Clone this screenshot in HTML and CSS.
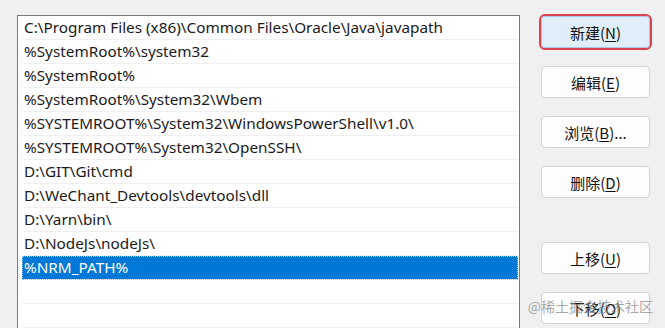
FILE: index.html
```html
<!DOCTYPE html>
<html lang="zh-CN">
<head>
    <meta charset="UTF-8">
    <meta name="viewport" content="width=device-width, initial-scale=1.0">
    <title>编辑环境变量</title>
    <link rel="stylesheet" href="styles.css">
</head>
<body>
    <div class="dialog">
        <ul class="path-list">
            <li class="path-list__item">C:\Program Files (x86)\Common Files\Oracle\Java\javapath</li>
            <li class="path-list__item">%SystemRoot%\system32</li>
            <li class="path-list__item">%SystemRoot%</li>
            <li class="path-list__item">%SystemRoot%\System32\Wbem</li>
            <li class="path-list__item">%SYSTEMROOT%\System32\WindowsPowerShell\v1.0\</li>
            <li class="path-list__item">%SYSTEMROOT%\System32\OpenSSH\</li>
            <li class="path-list__item">D:\GIT\Git\cmd</li>
            <li class="path-list__item">D:\WeChant_Devtools\devtools\dll</li>
            <li class="path-list__item">D:\Yarn\bin\</li>
            <li class="path-list__item">D:\NodeJs\nodeJs\</li>
            <li class="path-list__item path-list__item--selected">%NRM_PATH%</li>
            <li class="path-list__item"></li>
            <li class="path-list__item"></li>
        </ul>
        <div class="actions">
            <button class="btn btn--marked">新建(<u>N</u>)</button>
            <button class="btn">编辑(<u>E</u>)</button>
            <button class="btn">浏览(<u>B</u>)...</button>
            <button class="btn">删除(<u>D</u>)</button>
            <button class="btn btn--spaced">上移(<u>U</u>)</button>
            <button class="btn">下移(<u>O</u>)</button>
        </div>
    </div>
    <div class="watermark">@稀土掘金技术社区</div>
</body>
</html>
```

FILE: styles.css
```css
* {
    margin: 0;
    padding: 0;
    box-sizing: border-box;
}

body {
    height: 100vh;
    background-color: #f0f0f0;
    font-family: "Noto Sans", "Noto Sans CJK SC", sans-serif;
    color: #1a1a1a;
    overflow: hidden;
    position: relative;
}

.dialog {
    display: flex;
    align-items: flex-start;
    padding: 15px 0 0 17px;
}

.path-list {
    list-style: none;
    width: 503px;
    height: 313px;
    overflow: hidden;
    background-color: #fff;
    border: 1px solid #7a7a7a;
    border-bottom: none;
    padding: 0 1px 0 4px;
}

.path-list__item {
    height: 24px;
    line-height: 23px;
    padding-left: 2px;
    font-size: 15.3px;
    border-bottom: 1px solid #f0f0f0;
    white-space: nowrap;
}

.path-list__item--selected {
    background-color: #0078d7;
    color: #fff;
    outline: 1px dotted #9cc4ea;
    outline-offset: -1px;
}

.actions {
    display: flex;
    flex-direction: column;
    gap: 18px;
    margin-left: 21px;
    padding-top: 1px;
}

.btn {
    width: 109px;
    height: 32px;
    font-family: "Noto Sans CJK SC", "Noto Sans", sans-serif;
    font-size: 15px;
    color: #111;
    background-color: #fdfdfd;
    border: 1px solid #d3d3d3;
    border-radius: 4px;
}

.btn u {
    text-underline-offset: 2px;
}

.btn--marked {
    background-color: #e0eef9;
    border-color: #a8c8e6;
    outline: 2px solid #d9434e;
    outline-offset: 0;
}

.btn--spaced {
    margin-top: 26px;
}

.watermark {
    position: absolute;
    right: 12px;
    bottom: 12px;
    font-family: "Noto Sans CJK SC", sans-serif;
    font-size: 14px;
    color: rgba(140, 140, 140, 0.75);
}
```
